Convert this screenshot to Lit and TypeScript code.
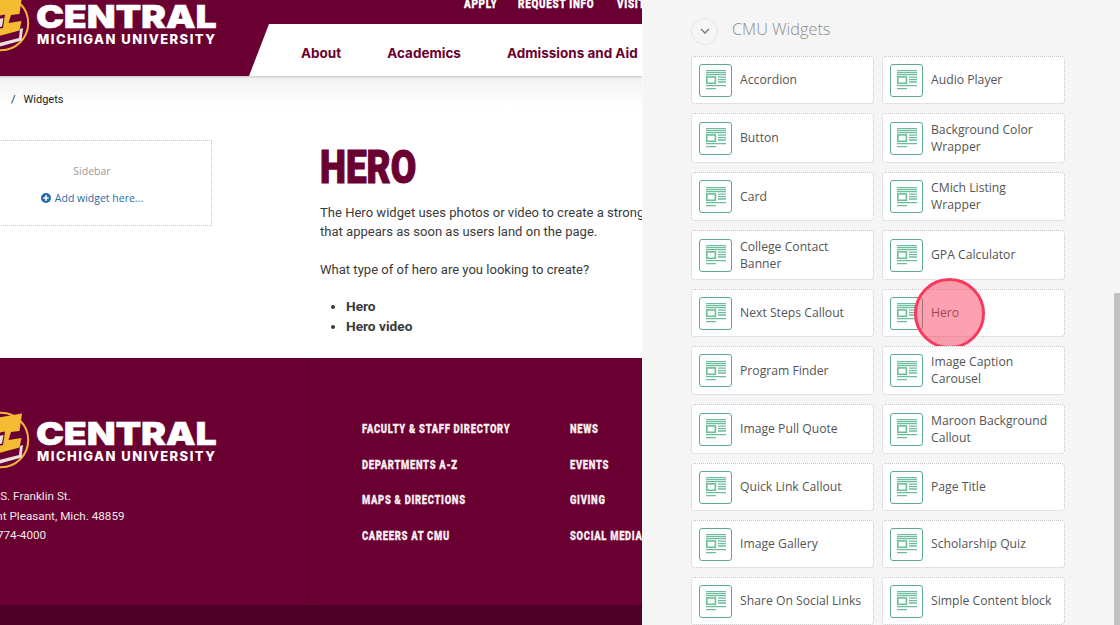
import { LitElement, html, css, svg } from "lit";
import { customElement } from "lit/decorators.js";

const WIDGETS: string[][] = [
  ["Accordion", "Audio Player"],
  ["Button", "Background Color Wrapper"],
  ["Card", "CMich Listing Wrapper"],
  ["College Contact Banner", "GPA Calculator"],
  ["Next Steps Callout", "Hero"],
  ["Program Finder", "Image Caption Carousel"],
  ["Image Pull Quote", "Maroon Background Callout"],
  ["Quick Link Callout", "Page Title"],
  ["Image Gallery", "Scholarship Quiz"],
  ["Share On Social Links", "Simple Content block"],
];

const widgetIcon = html`<span class="ico"><svg width="20" height="20" viewBox="0 0 20 20" fill="none" stroke="#6cbd9c" stroke-width="1.3">
  <path d="M0 .6H20M0 2.6H20M0 4.6H20M12 7.2H20M12 9.6H20M12 12H20M0 15.6H20M0 18.6H10"/>
  <rect x=".8" y="6.9" width="8.6" height="6.4" fill="#fff" stroke-width="1.6"/>
</svg></span>`;

const logoMark = svg`<svg class="mark" width="30" height="58" viewBox="-1 -29 30 58">
  <circle cx="0" cy="0" r="27.2" fill="#6a0032" stroke="#f6b53a" stroke-width="2"/>
  <path d="M-6 25 L20.5 17.5 L22 5 L19 6 L18 15 L-6 21Z" fill="#e9dfe0"/>
  <path d="M-6 -22 L21 -26.5 L18.5 -9 L10 -8 L7.5 0 L20.5 -2 L18.5 7.5 L-6 14Z" fill="#f5bb33"/>
  <path d="M-3 -7 L4 -8.5 L2 5 L-3 6Z" fill="#6a0032"/>
  <path d="M-3 -4 L2.5 -5 L1 3.5 L-3 4.5Z" fill="#e9dfe0"/>
</svg>`;

const logo = html`<div class="logo">${logoMark}<div class="wordmark"><div class="central">CENTRAL</div><div class="mich">MICHIGAN UNIVERSITY</div></div></div>`;

@customElement("app-root")
export class AppRoot extends LitElement {
  static styles = css`
    :host { display: block; width: 1120px; height: 625px; overflow: hidden; font-family: "Roboto", "Liberation Sans", sans-serif; }
    * { box-sizing: border-box; }
    .page { display: flex; width: 1120px; height: 625px; overflow: hidden; }
    .site { width: 642px; height: 625px; flex: none; display: flex; flex-direction: column; overflow: hidden; background: #fff; }

    .top { height: 76px; flex: none; background: #6a0032; display: flex; position: relative; box-shadow: 0 1px 2px rgba(0,0,0,.2); z-index: 1; }
    .top .logo { margin-top: -6px; }
    .topright { position: relative; flex: none; width: 394px; margin-left: 33px; display: flex; flex-direction: column; }
    .toplinks { height: 24px; display: flex; gap: 22px; padding-left: 215px; overflow: hidden; }
    .toplinks span { width: 0; }
    .toplinks i { font-style: normal; display: block; color: #fff; font: 900 13px/13px "Roboto", sans-serif; letter-spacing: .95px; -webkit-text-stroke: .3px #fff; margin-top: -3.5px; transform: scaleX(.76); transform-origin: left; white-space: nowrap; }
    .nav { flex: 1; background: #fff; clip-path: polygon(20px 0, 100% 0, 100% 100%, 0 100%); display: flex; padding: 8px 0 0 52px; align-items: center; gap: 46px; color: #6a0032; font: 700 13.5px/1 "Inter", sans-serif; white-space: nowrap; }

    .logo { display: flex; height: 58px; flex: none; }
    .mark { display: block; flex: none; margin-right: 6px; }
    .wordmark { width: 180px; padding-top: 7px; }
    .central { font: 900 32px/32px "Inter", sans-serif; color: #fff; -webkit-text-stroke: .4px #fff; display: inline-block; transform: scaleX(1.175); transform-origin: left; white-space: nowrap; height: 32px; letter-spacing: -.2px; }
    .mich { font: 800 13px/14px "Inter", sans-serif; color: #fff; letter-spacing: 1.45px; white-space: nowrap; margin-top: -1px; margin-left: 1px; }

    .crumb { height: 31px; flex: none; background: linear-gradient(#f0f1f2, #fff); padding: 17px 0 0 11px; font: 400 11px/14px "Roboto", sans-serif; color: #222; display: flex; gap: 8px; }

    .content { flex: 1; display: flex; padding-top: 33px; min-height: 0; }
    .sidebar { flex: none; width: 240px; height: 86px; margin-left: -28px; border: 1px dotted #c4c4c4; text-align: center; font-family: "Open Sans", sans-serif; padding-top: 22px; }
    .sb-title { font-size: 10.5px; line-height: 16px; color: #999; }
    .add { font-size: 10.5px; line-height: 16px; color: #2a6aa8; margin-top: 11px; display: flex; justify-content: center; align-items: center; gap: 4px; }
    .main { margin-left: 108px; width: 322px; flex: none; white-space: nowrap; overflow: hidden; color: #3a3a3a; font: 400 13.05px/19.5px "Roboto", sans-serif; }
    h1 { margin: 0; height: 62.5px; }
    h1 span { display: inline-block; color: #6a0032; font: 900 47px/54px "Roboto", sans-serif; -webkit-text-stroke: 1.2px #6a0032; transform: scaleX(.785); transform-origin: left; }
    p { margin: 0 0 18px; }
    ul { margin: 0; padding: 0 0 0 26px; font-weight: 700; font-size: 13.7px; }

    footer { height: 247px; flex: none; background: #6a0032; display: flex; }
    .fl { width: 309px; flex: none; padding-top: 53px; border-right: 1px solid #5e002c; overflow: hidden; }
    .addr { margin-top: 18px; color: #f4e6ea; font: 400 11.7px/19.6px "Roboto", sans-serif; white-space: nowrap; }
    .l1 { margin-left: -29px; }
    .l2 { margin-left: -27px; }
    .l3 { margin-left: -26px; }
    .links { display: grid; grid-template-columns: 208px 1fr; grid-auto-rows: 35.7px; padding: 60px 0 0 53px; overflow: hidden; flex: 1; }
    .links span { display: block; height: 35.7px; color: #f8eef1; }
    .links i { font-style: normal; display: inline-block; font: 900 12.5px/18px "Roboto", sans-serif; letter-spacing: .95px; -webkit-text-stroke: .3px #f8eef1; transform: scaleX(.75); transform-origin: left; white-space: nowrap; }
    .fbar { height: 20px; flex: none; background: #4f0026; }

    .panel { flex: 1; height: 625px; background: #f5f5f5; position: relative; overflow: hidden; padding: 18px 0 0 49px; box-shadow: inset 1px 0 0 #fafafa; }
    .ptitle { display: flex; align-items: center; height: 26px; gap: 14px; }
    .chev { width: 27px; height: 27px; border: 1px solid #e4e4e4; border-radius: 50%; display: flex; align-items: center; justify-content: center; flex: none; }
    .ptitle h2 { margin: -4px 0 0; font: 300 16.3px/26px "Open Sans", sans-serif; color: #8d8d8d; }
    .grid { display: grid; margin-top: 12px; grid-template-columns: 183px 183px; column-gap: 8px; row-gap: 9px; grid-template-rows: 48px 50px 49px 50px 48px 49px 50px 48px 48px 48px; }
    .card { position: relative; background: #fff; border: 1px dotted #c4c4c4; border-radius: 4px; display: flex; align-items: center; padding-left: 7px; gap: 8px; font: 400 12.2px/17px "Open Sans", sans-serif; color: #555; }
    .label { padding-bottom: 1px; max-width: 124px; }
    .ico { flex: none; width: 33px; height: 33px; border: 1.5px solid #5fa98d; border-radius: 3px; display: flex; align-items: center; justify-content: center; background: #fff; }
    .ico svg { display: block; }
    .marker { position: absolute; left: 31px; top: -12px; width: 71px; height: 71px; border-radius: 50%; border: 3.5px solid #f7385f; background: rgba(250, 55, 90, .47); }
    .thumb { position: absolute; right: 0; top: 293px; width: 6px; height: 332px; background: #c1c1c1; }
  `;

  render() {
    return html`<div class="page">
      <div class="site">
        <div class="top">
          ${logo}
          <div class="topright">
            <div class="toplinks"><span><i>APPLY</i></span><span style="margin-left:32px"><i>REQUEST INFO</i></span><span style="margin-left:77px"><i>VISIT</i></span></div>
            <div class="nav"><span>About</span><span>Academics</span><span>Admissions and Aid</span></div>
          </div>
        </div>
        <div class="crumb"><span>/</span><span>Widgets</span></div>
        <div class="content">
          <div class="sidebar">
            <div class="sb-title">Sidebar</div>
            <div class="add"><svg width="10" height="10" viewBox="0 0 10 10"><circle cx="5" cy="5" r="5" fill="#2a6aa8"/><path d="M5 2.3V7.7M2.3 5H7.7" stroke="#fff" stroke-width="1.7"/></svg>Add widget here...</div>
          </div>
          <div class="main">
            <h1><span>HERO</span></h1>
            <p>The Hero widget uses photos or video to create a strong visual impact<br>that appears as soon as users land on the page.</p>
            <p>What type of of hero are you looking to create?</p>
            <ul><li>Hero</li><li>Hero video</li></ul>
          </div>
        </div>
        <footer>
          <div class="fl">
            ${logo}
            <div class="addr"><div class="l1">1200 S. Franklin St.</div><div class="l2">Mount Pleasant, Mich. 48859</div><div class="l3">989-774-4000</div></div>
          </div>
          <div class="links">
            <span><i>FACULTY &amp; STAFF DIRECTORY</i></span><span><i>NEWS</i></span>
            <span><i>DEPARTMENTS A-Z</i></span><span><i>EVENTS</i></span>
            <span><i>MAPS &amp; DIRECTIONS</i></span><span><i>GIVING</i></span>
            <span><i>CAREERS AT CMU</i></span><span><i>SOCIAL MEDIA</i></span>
          </div>
        </footer>
        <div class="fbar"></div>
      </div>
      <div class="panel">
        <div class="ptitle">
          <span class="chev"><svg width="10" height="6" viewBox="0 0 10 6" fill="none" stroke="#777" stroke-width="1.3"><path d="M1 1l4 4 4-4"/></svg></span>
          <h2>CMU Widgets</h2>
        </div>
        <div class="grid">
          ${WIDGETS.flat().map((w) => html`<div class="card">${widgetIcon}<span class="label">${w}</span>${w === "Hero" ? html`<div class="marker"></div>` : ""}</div>`)}
        </div>
        <div class="thumb"></div>
      </div>
    </div>`;
  }
}
